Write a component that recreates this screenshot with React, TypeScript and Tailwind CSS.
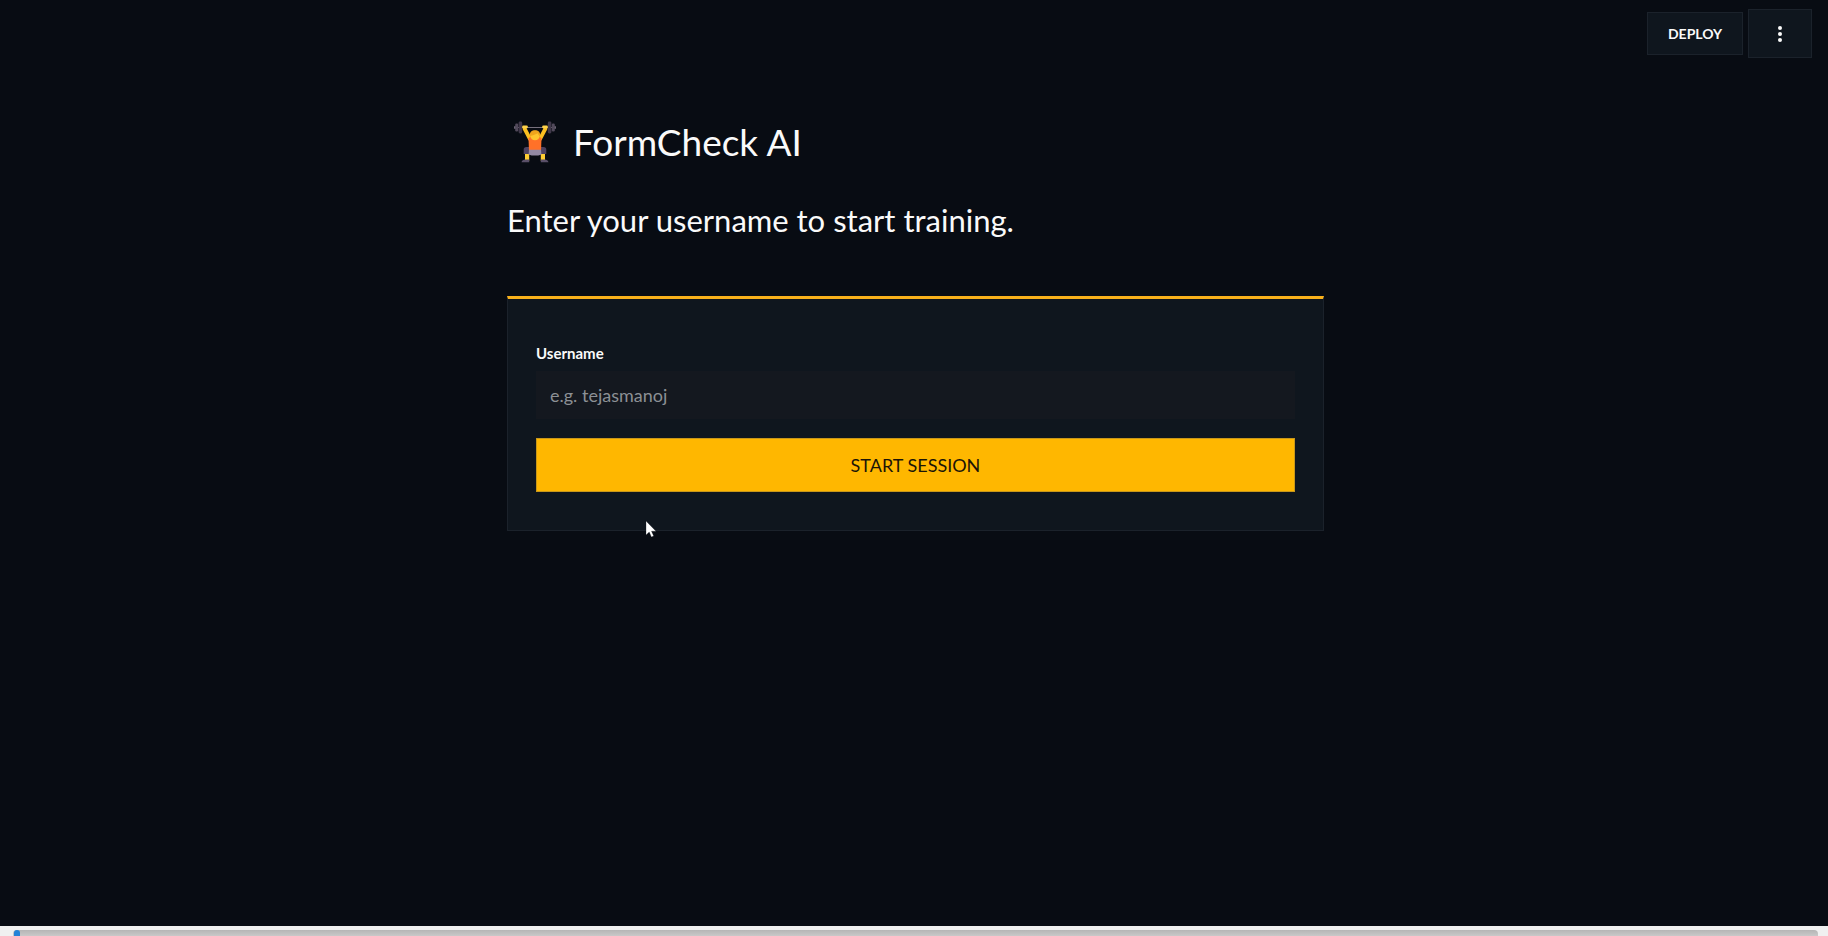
import React from 'react';

const Lifter: React.FC = () => {
    return (
        <svg viewBox="0 0 44 44" className="h-11 w-11 shrink-0" aria-hidden="true">
            {/* Barbell */}
            <path d="M5 7.5h34" stroke="#77717d" strokeWidth="1.2" />
            <path d="M1 6.2h2v2.6H1zM41 6.2h2v2.6h-2z" fill="#6a6372" />
            <rect x="2.2" y="3.5" width="3" height="8" rx="1.2" fill="#51495a" />
            <rect x="5.6" y="1.5" width="3.6" height="12" rx="1.4" fill="#40384a" />
            <rect x="34.800" y="1.5" width="3.6" height="12" rx="1.4" fill="#40384a" />
            <rect x="38.800" y="3.5" width="3" height="8" rx="1.2" fill="#51495a" />
            {/* Arms */}
            <path d="M11.500 8.500l5.500 10.500M32.500 8.500L27 19" stroke="#fbbf20" strokeWidth="3.800" strokeLinecap="round" />
            <path d="M10.500 7h3M30.500 7h3" stroke="#ffd34a" strokeWidth="2.800" strokeLinecap="round" />
            {/* Legs */}
            <path d="M12 34h4.200v7H12zM27.800 34H32v7h-4.200z" fill="#ffce32" />
            <path d="M17 27h-3.500c-2 0-2.800 1-2.800 2.600V34h6.500zM27 27h3.500c2 0 2.800 1 2.800 2.600V34h-6.500z" fill="#4d4260" />
            <path d="M8.500 42.300c.4-2 2-2.800 3.500-2.800h4.200v2.800zM35.500 42.300c-.4-2-2-2.800-3.500-2.800h-4.200v2.800z" fill="#5a5068" />
            {/* Torso */}
            <path d="M15.500 18.200c1.600-1.700 3.500-2 6.500-2s4.900.3 6.500 2L28 31H16z" fill="#ff7128" />
            <path d="M16 29.800h12l.4 4.600c-3.600 1.600-9.200 1.600-12.800 0z" fill="#9389a3" />
            {/* Head */}
            <circle cx="22" cy="15.500" r="4.800" fill="#ffc52d" />
            <path d="M17 16c-.6-4.200 2-5.800 5-5.800s5.600 1.600 5 5.800c-1.400-.6-2-1.600-2.300-2.700-1.800 1.300-4.600 2-7.700 2.700z" fill="#f0a51d" />
        </svg>
    );
};

const App: React.FC = () => {
    return (
        <div className="relative flex min-h-screen flex-col bg-[#080c13] font-['Lato',sans-serif] text-[#fafafa]">
            {/* Toolbar */}
            <header className="flex h-[60px] items-center justify-end gap-[5px] pr-4 pt-[7px]">
                <button className="h-[43px] w-24 border border-[#1b222b] bg-[#0f161e] text-sm font-bold">DEPLOY</button>
                <button
                    aria-label="Menu"
                    className="flex h-[49px] w-16 items-center justify-center border border-[#1b222b] bg-[#0f161e]"
                >
                    <svg viewBox="0 0 18 18" className="h-[18px] w-[18px]" fill="#fafafa">
                        <circle cx="9" cy="3" r="2" />
                        <circle cx="9" cy="9" r="2" />
                        <circle cx="9" cy="15" r="2" />
                    </svg>
                </button>
            </header>

            <main className="flex-1 pl-[3px]">
                <div className="mx-auto max-w-[817px] pt-14">
                    <h1 className="flex items-center gap-4 pl-[6px] text-[37px] leading-[52px]">
                        <Lifter />
                        FormCheck AI
                    </h1>
                    <h2 className="mt-7 text-[31px] leading-[48px]">Enter your username to start training.</h2>

                    {/* Login form */}
                    <form
                        className="mt-[52px] border border-t-[3px] border-[#1b222b] border-t-[#f9b11b] bg-[#0f161e] px-7 pb-[38px] pt-11"
                        onSubmit={(e) => e.preventDefault()}
                    >
                        <label htmlFor="username" className="block text-[15px] font-bold leading-5">
                            Username
                        </label>
                        <input
                            id="username"
                            type="text"
                            placeholder="e.g. tejasmanoj"
                            className="mt-2 block h-12 w-full bg-[#14181f] px-[14px] text-lg outline-none placeholder:text-[#8c9095]"
                        />
                        <button className="mt-[19px] block h-[54px] w-full border border-[#c8971a] bg-[#ffb700] text-lg text-[#1b1407]">
                            START SESSION
                        </button>
                    </form>
                </div>
            </main>

            {/* Playback bar */}
            <footer className="h-[10px] overflow-hidden bg-[#f0f0f0] pl-[13px] pr-[10px] pt-1">
                <input
                    type="range"
                    aria-label="Seek"
                    defaultValue={0}
                    className="block h-2 w-full appearance-none rounded-t bg-linear-to-b from-[#b5b5b5] to-[#cfcfcf] pl-px [&::-webkit-slider-thumb]:h-2 [&::-webkit-slider-thumb]:w-[6px] [&::-webkit-slider-thumb]:appearance-none [&::-webkit-slider-thumb]:rounded-t-full [&::-webkit-slider-thumb]:bg-[#2583d8]"
                />
            </footer>

            {/* Mouse pointer */}
            <svg viewBox="0 0 12 18" className="absolute left-[645px] top-[520px] h-[18px] w-3" aria-hidden="true">
                <path d="M1 1v14l3.200-3 2.200 5 2.300-1-2.200-4.800H11z" fill="#fff" stroke="#10151c" strokeWidth=".3" />
            </svg>
        </div>
    );
};

export default App;
